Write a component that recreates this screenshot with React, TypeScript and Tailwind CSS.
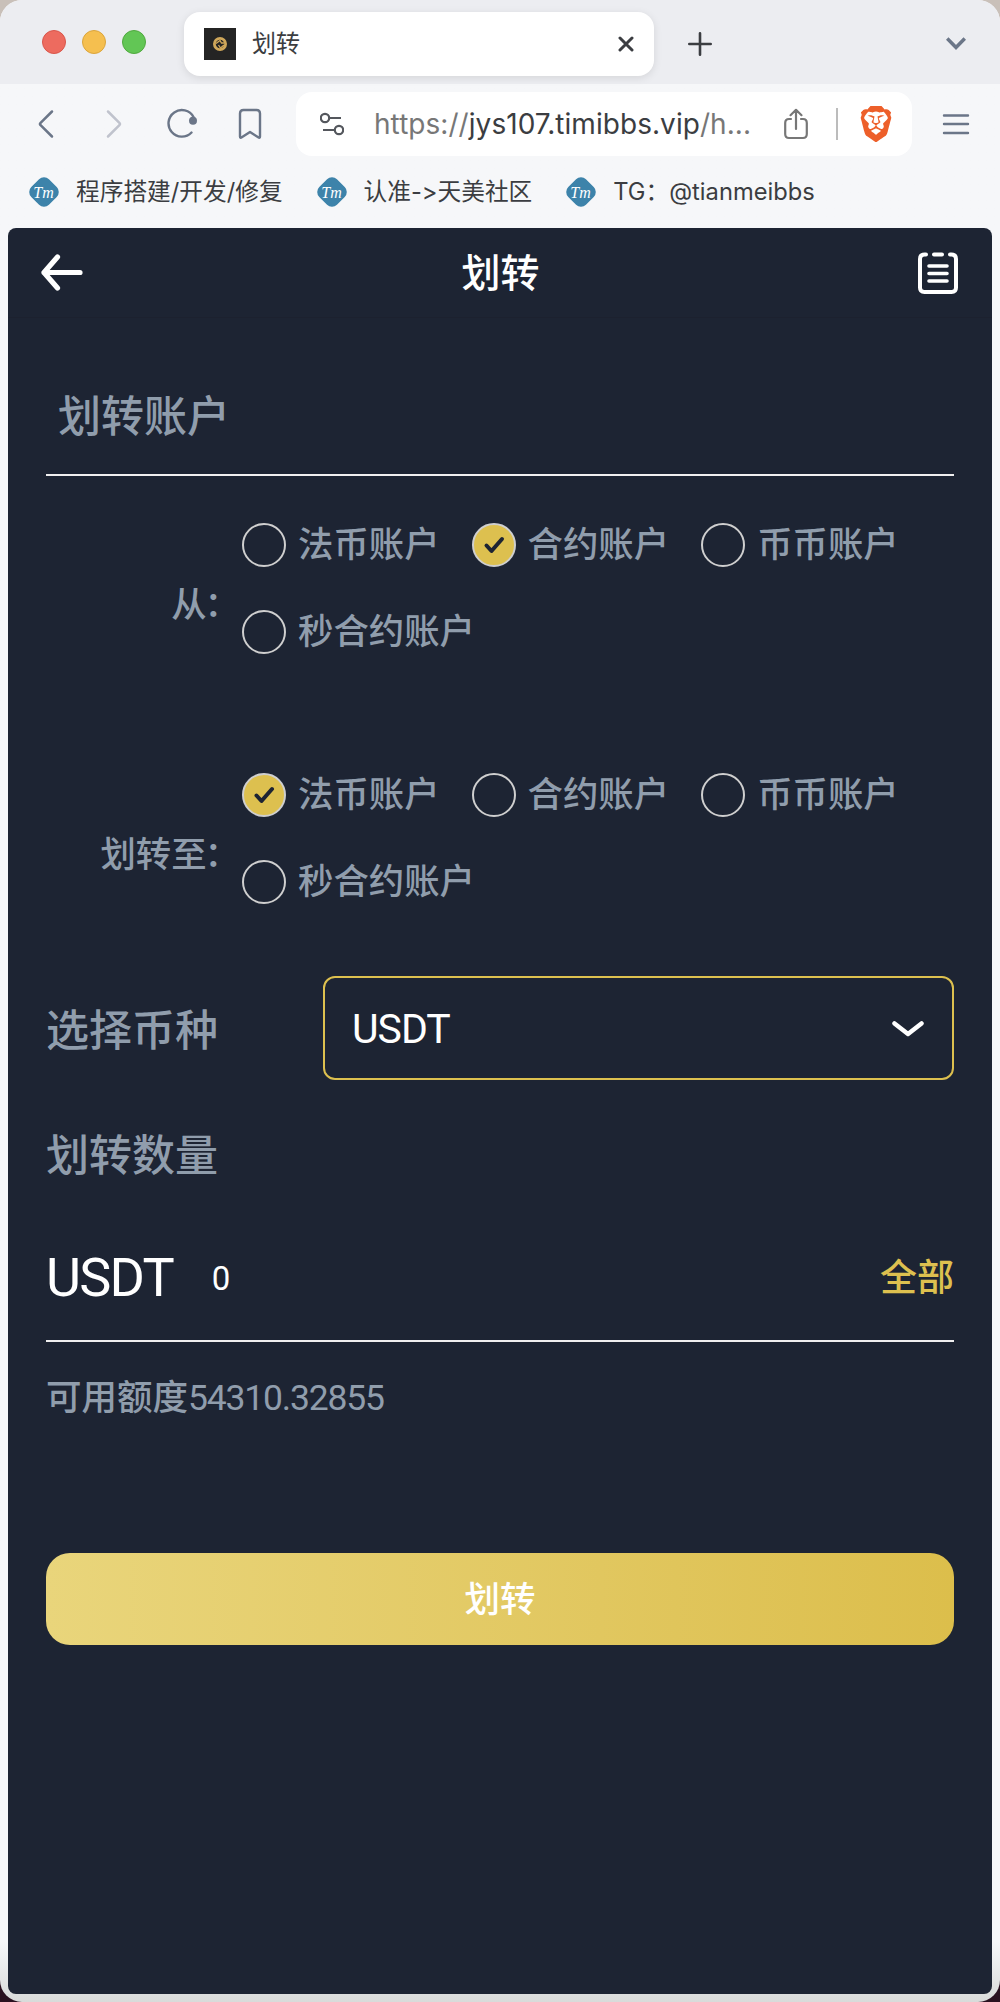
import { useState } from "react";
import clsx from "clsx";
import { SiBrave } from "react-icons/si";

const ACCOUNTS = ["法币账户", "合约账户", "币币账户", "秒合约账户"];

const BOOKMARKS = ["程序搭建/开发/修复", "认准->天美社区", "TG：@tianmeibbs"];

const BookmarkIcon = () => (
  <svg width="30" height="30" viewBox="0 0 30 30" className="shrink-0">
    <rect
      x="2.5"
      y="2.5"
      width="25"
      height="25"
      rx="7"
      fill="#3d83aa"
      transform="rotate(45 15 15)"
    />
    <text
      x="14.5"
      y="20.5"
      textAnchor="middle"
      fontFamily="Liberation Serif, serif"
      fontStyle="italic"
      fontSize="16"
      fill="#fff"
    >
      Tm
    </text>
  </svg>
);

const TabStrip = () => (
  <div className="flex h-[84px] items-center bg-[#ecedf1] pt-1">
    <div className="-mt-1 flex gap-4 pl-[42px]">
      <span className="h-6 w-6 rounded-full border border-[#d9564b] bg-[#ed6b5f]" />
      <span className="h-6 w-6 rounded-full border border-[#dba53c] bg-[#f5bf4f]" />
      <span className="h-6 w-6 rounded-full border border-[#50a93f] bg-[#62c655]" />
    </div>
    <div className="ml-[38px] flex h-16 w-[470px] items-center rounded-2xl bg-white px-5 shadow-[0_2px_8px_rgba(0,0,0,0.1)]">
      <svg width="32" height="32" viewBox="0 0 32 32">
        <rect width="32" height="32" fill="#242424" />
        <circle cx="16" cy="16" r="5.6" fill="none" stroke="#cfa75a" strokeWidth="2.8" />
        <path d="M12 15.5l4-3 1.5 2.5h2.5M20 17l-3.5 3-2-3" fill="none" stroke="#cfa75a" strokeWidth="1.3" />
      </svg>
      <span className="ml-4 flex-1 text-2xl text-[#3b3d41]">划转</span>
      <svg width="16" height="16" viewBox="0 0 16 16" stroke="#3b3d41" strokeWidth="3" strokeLinecap="round">
        <path d="M2 2l12 12M14 2L2 14" />
      </svg>
    </div>
    <svg className="ml-[34px]" width="24" height="24" viewBox="0 0 24 24" stroke="#3b3d41" strokeWidth="2.6" strokeLinecap="round">
      <path d="M12 1.3v21.4M1.3 12h21.4" />
    </svg>
    <svg className="mr-[34px] ml-auto" width="20" height="14" viewBox="0 0 20 14" fill="none" stroke="#6b7688" strokeWidth="3.6">
      <path d="M1.2 1.5L10 10.5l8.8-9" />
    </svg>
  </div>
);

const Toolbar = () => (
  <div className="flex h-20 items-center pl-[30px]">
    <div className="flex gap-9">
      <svg width="32" height="32" viewBox="0 0 32 32" fill="none" stroke="#6b7688" strokeWidth="2.5" strokeLinecap="round" strokeLinejoin="round">
        <path d="M22 3.5L10.6 14.8q-1.2 1.2 0 2.4L22 28.5" />
      </svg>
      <svg width="32" height="32" viewBox="0 0 32 32" fill="none" stroke="#c0c3cd" strokeWidth="2.5" strokeLinecap="round" strokeLinejoin="round">
        <path d="M10 3.5l11.4 11.3q1.2 1.2 0 2.4L10 28.5" />
      </svg>
      <svg width="32" height="32" viewBox="0 0 32 32" fill="none" stroke="#6b7688" strokeWidth="2.4" strokeLinecap="round">
        <path d="M25.5 24.5A13.3 13.3 0 1 1 27.5 9" />
        <circle cx="27" cy="12.8" r="4" fill="#6b7688" stroke="none" />
      </svg>
      <svg width="32" height="32" viewBox="0 0 32 32" fill="none" stroke="#6b7688" strokeWidth="2.4" strokeLinejoin="round">
        <path d="M6 5.5q0-3.500 3.500-3.500h13q3.500 0 3.500 3.500V28.500q0 2-1.800.8L16 24l-8.200 5.300Q6 30.500 6 28.500z" />
      </svg>
    </div>
    <div className="ml-[30px] flex h-16 w-[616px] items-center rounded-2xl bg-white pr-[18px] pl-6">
      <svg width="24" height="24" viewBox="0 0 24 24" fill="none" stroke="#54575d" strokeWidth="2.2">
        <circle cx="5" cy="6" r="4.2" />
        <path d="M9.5 6H21M3 18h11.5" />
        <circle cx="19" cy="18" r="4.2" />
      </svg>
      <span className="ml-[30px] flex-1 text-[28px] tracking-[0.05px] whitespace-nowrap text-[#777]">
        https://<span className="text-[#3b3d41]">jys107.timibbs.vip</span>/h...
      </span>
      <svg width="24" height="32" viewBox="0 0 24 32" fill="none" stroke="#777" strokeWidth="2.2" strokeLinecap="round" strokeLinejoin="round">
        <path d="M7 11H5q-3.800 0-3.800 4v11q0 4 3.800 4h14q3.800 0 3.800-4V15q0-4-3.800-4h-2M12 21V2M6.500 7.200L12 1.800l5.500 5.400" />
      </svg>
      <span className="mr-[20px] ml-[28px] h-8 w-0.5 bg-[#bcbcbc]" />
      <SiBrave size={36} className="text-[#ed5f2a]" />
    </div>
    <svg className="ml-[30px]" width="28" height="22" viewBox="0 0 28 22" stroke="#6b7688" strokeWidth="2.4" strokeLinecap="round">
      <path d="M2 2.5h24M2 11h24M2 20h24" />
    </svg>
  </div>
);

const Radio = ({
  label,
  checked,
  onClick,
}: {
  label: string;
  checked: boolean;
  onClick: () => void;
}) => (
  <div className="flex h-[87px] cursor-pointer items-center gap-3" onClick={onClick}>
    <span
      className={clsx(
        "flex h-11 w-11 items-center justify-center rounded-full border-2 border-[#cfcfcf]",
        checked && "bg-[#ddc04f]"
      )}
    >
      {checked && (
        <svg width="22" height="20" viewBox="0 0 22 20" fill="none" stroke="#1d2433" strokeWidth="4" strokeLinecap="round" strokeLinejoin="round">
          <path d="M3.5 10.5l5 5.5L19 4" />
        </svg>
      )}
    </span>
    <span className="pt-0.5 whitespace-nowrap">{label}</span>
  </div>
);

const AccountGroup = ({
  label,
  value,
  onChange,
}: {
  label: string;
  value: string;
  onChange: (account: string) => void;
}) => (
  <div className="flex items-center text-[35.4px] font-medium text-[#909dac]">
    <span className="w-[196px] pt-9 text-right whitespace-nowrap">
      {label}
      <span className="-ml-0.5 pr-0.5">：</span>
    </span>
    <div className="flex flex-1 flex-wrap gap-x-[32px]">
      {ACCOUNTS.map((account) => (
        <Radio
          key={account}
          label={account}
          checked={account === value}
          onClick={() => onChange(account)}
        />
      ))}
    </div>
  </div>
);

export default function App() {
  const [from, setFrom] = useState("合约账户");
  const [to, setTo] = useState("法币账户");

  return (
    <div className="h-[2002px] w-[1000px] bg-linear-to-b from-[#c9c0b9] from-50% to-[#2a1220] to-50% font-['Inter','Noto_Sans_CJK_SC',sans-serif]">
      <div className="flex h-full flex-col overflow-hidden rounded-[22px] bg-linear-to-b from-[#f6f7f9] from-97% to-[#d9dbda]">
        {/* Browser chrome */}
        <TabStrip />
        <Toolbar />
        <div className="flex h-16 items-center gap-[34px] pb-2 pl-[29px] text-[23.7px] text-[#3b3d41] [font-variant-ligatures:none]">
          {BOOKMARKS.map((bookmark) => (
            <div key={bookmark} className="flex items-center gap-[17px]">
              <BookmarkIcon />
              <span className="whitespace-nowrap">{bookmark}</span>
            </div>
          ))}
        </div>

        {/* Page */}
        <div className="mx-2 mb-2 flex-1 rounded-lg bg-[#1d2433] font-['Roboto','Noto_Sans_CJK_SC',sans-serif] leading-none">
          <div className="flex h-[90px] items-center justify-between border-b border-[#1c212f] pr-[34px] pl-[33px] text-white">
            <svg width="42" height="38" viewBox="0 0 42 38" fill="none" stroke="#fff" strokeWidth="5.2" strokeLinecap="round" strokeLinejoin="round">
              <path d="M16.5 3L3 18.5 16.5 34M3 18.5h36" />
            </svg>
            <span className="pt-1 text-[39px] font-medium">划转</span>
            <svg width="40" height="42" viewBox="0 0 40 42" fill="none" stroke="#fff" strokeWidth="4" strokeLinecap="round">
              <path d="M8 2.5H6.500Q2 2.500 2 7v28.500Q2 40 6.500 40h27q4.500 0 4.500-4.500V7q0-4.500-4.500-4.500H32M16 2.500h8" />
              <path d="M11 14h18M11 21.500h18M11 29h18" strokeWidth="3.6" />
            </svg>
          </div>

          <div className="mx-[38px] flex flex-col">
            <div className="mt-[38px] flex h-[120px] items-center border-b-2 border-[#f0eff0] pt-[5px] pl-3 text-[43px] font-medium text-[#909dac]">
              划转账户
            </div>

            <div className="mt-[25px] flex flex-col gap-[76px]">
              <AccountGroup label="从" value={from} onChange={setFrom} />
              <AccountGroup label="划转至" value={to} onChange={setTo} />
            </div>

            <div className="mt-[51px] flex h-[104px] items-center text-[43px]">
              <span className="w-[277px] pt-1.5 font-medium text-[#909dac]">选择币种</span>
              <div className="flex h-full flex-1 items-center justify-between rounded-xl border-2 border-[#ddc04f] pt-0.5 pr-[28px] pl-[27px] text-[41px] tracking-[-1px] text-white">
                USDT
                <svg width="32" height="18" viewBox="0 0 32 18" fill="none" stroke="#fff" strokeWidth="4.5" strokeLinecap="round" strokeLinejoin="round">
                  <path d="M2.500 3.500L16 14 29.500 3.500" />
                </svg>
              </div>
            </div>

            <div className="mt-[42px] flex h-16 items-center pt-[4px] text-[43px] font-medium text-[#909dac]">
              划转数量
            </div>

            <div className="mt-[26px] flex h-[130px] items-center border-b-2 border-[#f0eff0] pt-1 text-white">
              <span className="text-[54px] tracking-[-1.8px]">USDT</span>
              <span className="ml-[39px] flex-1 text-[33px]">0</span>
              <span className="text-[37px] font-medium text-[#ddc04f]">全部</span>
            </div>

            <div className="mt-[27px] flex h-14 items-center pt-[3px] text-[35.5px] text-[#909dac]">
              <span className="font-medium">可用额度</span>
              <span className="tracking-[-1.2px]">54310.32855</span>
            </div>

            <button className="mt-[128px] h-[92px] cursor-pointer rounded-3xl bg-linear-to-r from-[#e9d57b] to-[#dcbe4b] pt-[4px] text-[35.5px] font-medium text-white">
              划转
            </button>
          </div>
        </div>
      </div>
    </div>
  );
}
